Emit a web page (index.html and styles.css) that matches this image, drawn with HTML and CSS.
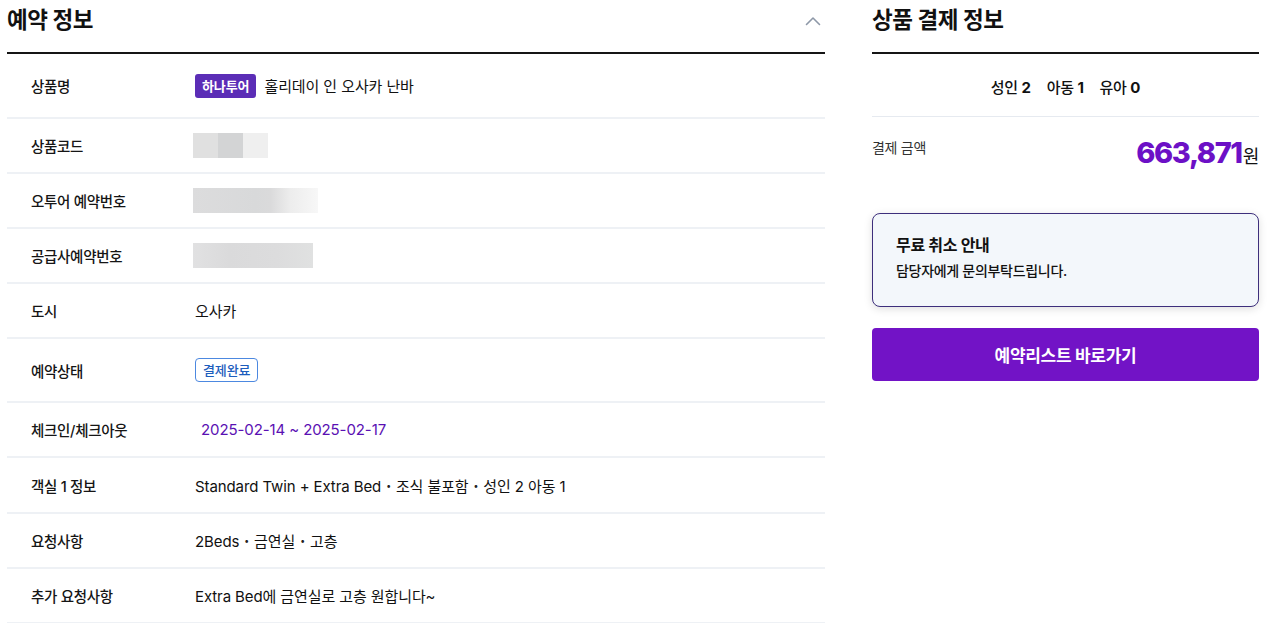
FILE: index.html
```html
<!DOCTYPE html>
<html lang="ko">
<head>
<meta charset="utf-8">
<title>예약 정보</title>
<link rel="stylesheet" href="styles.css">
</head>
<body>
<div class="page">
  <section class="left">
    <div class="sec-head">
      <h2 class="sec-title">예약 정보</h2>
      <svg class="chev" width="16" height="10" viewBox="0 0 16 10"><path d="M1.5 8.5 L8 2 L14.5 8.5" fill="none" stroke="#8e98a8" stroke-width="1.6" stroke-linecap="round" stroke-linejoin="round"/></svg>
    </div>
    <div class="rows">
      <div class="row h65"><div class="label">상품명</div><div class="value"><span class="badge-brand">하나투어</span><span>홀리데이 인 오사카 난바</span></div></div>
      <div class="row"><div class="label">상품코드</div><div class="value"><span class="blur b1"><i class="c1"></i><i class="c2"></i><i class="c3"></i></span></div></div>
      <div class="row"><div class="label">오투어 예약번호</div><div class="value"><span class="blur b2"></span></div></div>
      <div class="row"><div class="label">공급사예약번호</div><div class="value"><span class="blur b3"></span></div></div>
      <div class="row"><div class="label">도시</div><div class="value">오사카</div></div>
      <div class="row h64"><div class="label">예약상태</div><div class="value"><span class="badge-status">결제완료</span></div></div>
      <div class="row"><div class="label">체크인/체크아웃</div><div class="value date">2025-02-14 ~ 2025-02-17</div></div>
      <div class="row h57"><div class="label">객실 1 정보</div><div class="value"><span>Standard Twin + Extra Bed<span class="dot">·</span>조식 불포함<span class="dot">·</span>성인 2 아동 1</span></div></div>
      <div class="row"><div class="label">요청사항</div><div class="value"><span>2Beds<span class="dot">·</span>금연실<span class="dot">·</span>고층</span></div></div>
      <div class="row"><div class="label">추가 요청사항</div><div class="value">Extra Bed에 금연실로 고층 원합니다~</div></div>
    </div>
  </section>
  <aside class="right">
    <div class="sec-head">
      <h2 class="sec-title">상품 결제 정보</h2>
    </div>
    <div class="people"><span>성인 <b>2</b></span><span>아동 <b>1</b></span><span>유아 <b>0</b></span></div>
    <div class="pay">
      <div class="pay-label">결제 금액</div>
      <div class="pay-amount"><span class="num">663,871</span><span class="won">원</span></div>
    </div>
    <div class="notice">
      <div class="notice-title">무료 취소 안내</div>
      <div class="notice-text">담당자에게 문의부탁드립니다.</div>
    </div>
    <button class="cta">예약리스트 바로가기</button>
  </aside>
</div>
</body>
</html>
```
FILE: styles.css
```css
* { box-sizing: border-box; }
html, body { margin: 0; padding: 0; background: #fff; }
body {
  font-family: Inter, "Noto Sans CJK KR", sans-serif;
  color: #111;
  font-size: 15px;
  letter-spacing: -0.3px;
}
.page {
  display: flex;
  gap: 47px;
  padding-left: 7px;
}
.left { width: 818px; flex: none; }
.right { width: 387px; flex: none; }
.sec-head {
  height: 54px;
  display: flex;
  justify-content: space-between;
  align-items: flex-start;
  padding-top: 6px;
  border-bottom: 2px solid #151515;
}
.sec-title {
  margin: 0;
  font-size: 22.5px;
  line-height: 28px;
  font-weight: 700;
  letter-spacing: -0.4px;
}
.chev { margin-top: 10px; margin-right: 4px; }
.row {
  display: grid;
  grid-template-columns: 164px 1fr;
  align-items: center;
  height: 55px;
  padding-left: 24px;
  border-bottom: 2px solid #eef1f5;
}
.row.h65 { height: 65px; }
.row.h64 { height: 64px; }
.row.h57 { height: 56px; }
.label { font-size: 14.5px; font-weight: 500; color: #151515; }
.value { display: flex; align-items: center; gap: 8px; font-size: 15px; letter-spacing: -0.1px; }
.dot {
  display: inline-block;
  font-family: "Noto Sans CJK KR", sans-serif;
  font-weight: 700;
  padding: 0 5px;
  color: #222;
}
.badge-brand {
  display: inline-block;
  background: #5b2db6;
  color: #fff;
  font-weight: 700;
  font-size: 13px;
  line-height: 24px;
  padding: 0 7px;
  border-radius: 3px;
}
.badge-status {
  display: inline-block;
  border: 1px solid #4c88e0;
  color: #1d5dbd;
  font-size: 13px;
  font-weight: 500;
  line-height: 22px;
  padding: 0 7px;
  border-radius: 4px;
}
.date { color: #5a10b3; padding-left: 6px; }
.blur { display: inline-flex; height: 25px; margin-left: -2px; }
.b1 i { display: block; width: 25px; height: 25px; }
.b1 .c1 { background: #e0e0e0; }
.b1 .c2 { background: #d3d4d5; }
.b1 .c3 { background: #efefef; }
.b2 {
  width: 125px;
  background: linear-gradient(to right, #dcdcdd 0%, #d8d9da 50%, #dadadb 62%, #ededed 78%, #f7f7f7 100%);
}
.b3 {
  width: 120px;
  background: linear-gradient(to right, #e1e1e2 0%, #dadadb 30%, #dcdcdd 70%, #e0e1e1 100%);
}
.people {
  height: 63px;
  display: flex;
  justify-content: center;
  align-items: center;
  gap: 16px;
  border-bottom: 1px solid #e6eaf0;
  padding-top: 2px;
}
.people span { font-weight: 500; }
.people b { font-weight: 700; }
.pay {
  height: 96px;
  display: flex;
  justify-content: space-between;
  align-items: flex-start;
  padding-top: 20px;
}
.pay-label { font-size: 14px; line-height: 22px; color: #333; }
.pay-amount { margin-top: -2px; line-height: 36px; display: flex; align-items: baseline; }
.num {
  font-size: 29px;
  font-weight: 800;
  color: #6c10c6;
  letter-spacing: -1.4px;
}
.won { font-size: 18px; color: #111; margin-left: 1px; }
.notice {
  height: 94px;
  border: 1px solid #3d2f7c;
  border-radius: 8px;
  background: #f3f7fb;
  box-shadow: 0 2px 8px rgba(0,0,0,0.13);
  padding: 19px 23px 0;
}
.notice-title { font-size: 16px; line-height: 24px; font-weight: 700; }
.notice-text { font-size: 14px; line-height: 24px; margin-top: 2px; font-weight: 500; }
.cta {
  display: block;
  width: 100%;
  height: 53px;
  margin-top: 21px;
  border: none;
  border-radius: 4px;
  background: #7213c6;
  color: #fff;
  font-family: Inter, "Noto Sans CJK KR", sans-serif;
  font-size: 17px;
  font-weight: 700;
  letter-spacing: -0.3px;
}
```
